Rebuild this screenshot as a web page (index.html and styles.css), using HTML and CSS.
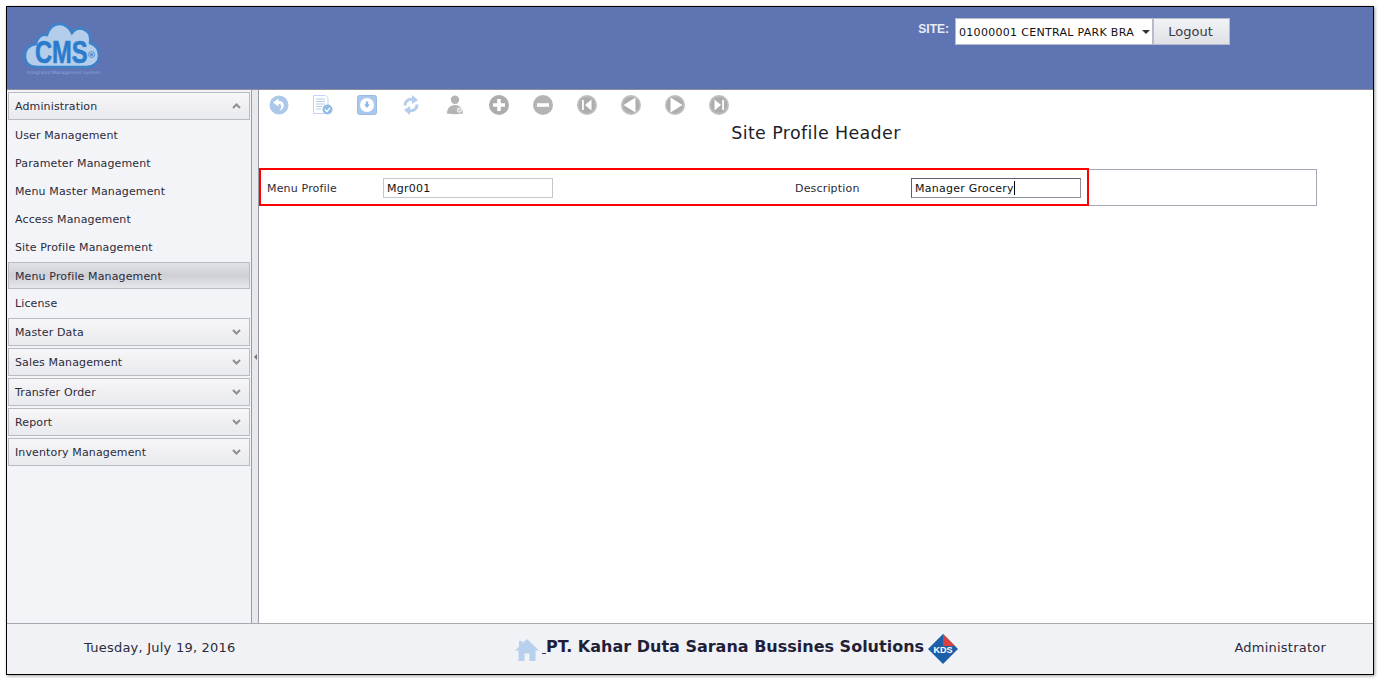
FILE: index.html
```html
<!DOCTYPE html>
<html>
	<head>
		<meta charset="UTF-8">
		<title>Site Profile Header</title>
		<link rel="stylesheet" href="styles.css">
	</head>
	<body>
		<div class="frame">
			<div class="top">
				<div class="logo">
					<svg class="cloud" width="76" height="45" viewBox="0 0 76 45">
						<path d="M14 44C5 44 1 39 1 33C1 26 6 22 12 21C13 14 18 11 23 12C25 5 30 1 35 1C41 1 46 5 48 10C51 6 55 5 59 6C65 8 67 14 66 20C72 22 75 27 75 33C75 39 70 44 63 44Z" fill="#b3cdea" stroke="#3b82cb" stroke-width="2.500"/>
					</svg>
					<span class="logo-text">CMS</span>
					<span class="logo-reg">®</span>
					<span class="logo-sub">Integrated Management System</span>
				</div>
				<div class="site">
					<label class="site-label">SITE:</label>
					<div class="site-select">
						<span class="site-value">01000001 CENTRAL PARK BRA</span>
						<span class="site-arrow"></span>
					</div>
					<button class="logout">Logout</button>
				</div>
			</div>
			<div class="middle">
				<div class="side">
					<div class="group open">Administration
						<svg class="chev" width="9" height="6" viewBox="0 0 9 6"><path d="M1 5L4.500 1.500L8 5" fill="none" stroke="#8d8f94" stroke-width="2"/></svg>
					</div>
					<div class="link">User Management</div>
					<div class="link">Parameter Management</div>
					<div class="link">Menu Master Management</div>
					<div class="link">Access Management</div>
					<div class="link">Site Profile Management</div>
					<div class="link active">Menu Profile Management</div>
					<div class="link last">License</div>
					<div class="group">Master Data
						<svg class="chev" width="9" height="6" viewBox="0 0 9 6"><path d="M1 1L4.500 4.500L8 1" fill="none" stroke="#8d8f94" stroke-width="2"/></svg>
					</div>
					<div class="group">Sales Management
						<svg class="chev" width="9" height="6" viewBox="0 0 9 6"><path d="M1 1L4.500 4.500L8 1" fill="none" stroke="#8d8f94" stroke-width="2"/></svg>
					</div>
					<div class="group">Transfer Order
						<svg class="chev" width="9" height="6" viewBox="0 0 9 6"><path d="M1 1L4.500 4.500L8 1" fill="none" stroke="#8d8f94" stroke-width="2"/></svg>
					</div>
					<div class="group">Report
						<svg class="chev" width="9" height="6" viewBox="0 0 9 6"><path d="M1 1L4.500 4.500L8 1" fill="none" stroke="#8d8f94" stroke-width="2"/></svg>
					</div>
					<div class="group">Inventory Management
						<svg class="chev" width="9" height="6" viewBox="0 0 9 6"><path d="M1 1L4.500 4.500L8 1" fill="none" stroke="#8d8f94" stroke-width="2"/></svg>
					</div>
				</div>
				<div class="split"><span class="split-arrow"></span></div>
				<div class="main">
					<div class="tools">
						<svg class="tool" width="20" height="20" viewBox="0 0 20 20"><circle cx="10" cy="10" r="9.500" fill="#abc8ea"/><path d="M9.500 3.500L4 7.500L9.500 11.500V9C12.500 9 13.500 11.500 10.500 16C16 14 17 6 9.500 6Z" fill="#fff"/></svg>
						<svg class="tool" width="20" height="20" viewBox="0 0 20 20"><path d="M.5 .5H12.500L15 3V18.500H.5Z" fill="#fff" stroke="#c3d6ee"/><path d="M3 4H12M3 6.500H12M3 9H12M3 11.500H9M3 14H8" stroke="#b6cce8"/><circle cx="14.500" cy="14.500" r="5" fill="#92bbe6"/><path d="M12 14.500L14 16.500L17 12.800" fill="none" stroke="#fff" stroke-width="1.300"/></svg>
						<svg class="tool" width="20" height="20" viewBox="0 0 20 20"><rect x=".5" y=".5" width="19" height="19" rx="2" fill="#a9c8ec" stroke="#9dbbe0"/><circle cx="10" cy="10" r="7" fill="#fff"/><path d="M8.800 6.500H11.200V9.500H13L10 13L7 9.500H8.800Z" fill="#8fb6e2"/></svg>
						<svg class="tool" width="20" height="20" viewBox="0 0 20 20"><path d="M4 10.500C4 6.500 7 3.500 12 4.500M16 9.500C16 13.500 13 16.500 8 15.500" fill="none" stroke="#b4cdec" stroke-width="3"/><path d="M11 0L17 5L11 9ZM9 20L3 15L9 11Z" fill="#b4cdec"/></svg>
						<svg class="tool" width="20" height="20" viewBox="0 0 20 20"><circle cx="10" cy="4.800" r="4.200" fill="#b4b4b4"/><path d="M2 18.500C2 13.500 5 10 10 10C15 10 18 13.500 18 18.500C13 19.500 7 19.500 2 18.500Z" fill="#b4b4b4"/><circle cx="14.500" cy="15" r="2.300" fill="#d2d2d2" stroke="#fff" stroke-width=".8"/></svg>
						<svg class="tool" width="20" height="20" viewBox="0 0 20 20"><circle cx="10" cy="10" r="10" fill="#adadad"/><path d="M8.200 4H11.800V8.200H16V11.800H11.800V16H8.200V11.800H4V8.200H8.200Z" fill="#fff"/></svg>
						<svg class="tool" width="20" height="20" viewBox="0 0 20 20"><circle cx="10" cy="10" r="10" fill="#b4b4b4"/><rect x="4" y="8.200" width="12" height="3.600" fill="#fff"/></svg>
						<svg class="tool" width="20" height="20" viewBox="0 0 20 20"><circle cx="10" cy="10" r="9" fill="#adadad" stroke="#bdbdbd" stroke-width="2"/><path d="M5 5H6.800V15H5ZM14.500 4.500V15.500L8 10Z" fill="#fff"/></svg>
						<svg class="tool" width="20" height="20" viewBox="0 0 20 20"><circle cx="10" cy="10" r="9" fill="#adadad" stroke="#bdbdbd" stroke-width="2"/><path d="M14.500 2.500V17.500L2.500 10Z" fill="#fff"/></svg>
						<svg class="tool" width="20" height="20" viewBox="0 0 20 20"><circle cx="10" cy="10" r="9" fill="#adadad" stroke="#bdbdbd" stroke-width="2"/><path d="M5.500 2.500V17.500L17.500 10Z" fill="#fff"/></svg>
						<svg class="tool" width="20" height="20" viewBox="0 0 20 20"><circle cx="10" cy="10" r="9" fill="#adadad" stroke="#bdbdbd" stroke-width="2"/><path d="M13.200 5H15V15H13.200ZM5.500 4.500V15.500L12 10Z" fill="#fff"/></svg>
					</div>
					<h1 class="title">Site Profile Header</h1>
					<div class="form">
						<div class="field">
							<span class="field-label">Menu Profile</span>
							<div class="field-input">Mgr001</div>
						</div>
						<div class="field">
							<span class="field-label">Description</span>
							<div class="field-input focus">Manager Grocery<span class="caret"></span></div>
						</div>
						<div class="mark"></div>
					</div>
				</div>
			</div>
			<div class="bottom">
				<div class="date">Tuesday, July 19, 2016</div>
				<div class="company">
					<svg class="home" width="26" height="24" viewBox="0 0 26 24"><path d="M13 1L25 12.500H21.500V23H15.500V15.500H10.500V23H4.500V12.500H1L5 8.700V3H8.500V5.300Z" fill="#b7d0ee"/></svg>
					<span class="under"></span><span class="company-name">PT. Kahar Duta Sarana Bussines Solutions</span>
					<svg class="kds" width="30" height="30" viewBox="0 0 30 30">
						<path d="M15 0L30 15H0Z" fill="#1c5fa8"/>
						<path d="M15 0L27 12H15Z" fill="#d8413f"/>
						<path d="M0 15H30L15 30Z" fill="#1c5fa8"/>
						<text class="kds-text" x="15" y="18.500" text-anchor="middle">KDS</text>
					</svg>
				</div>
				<div class="user">Administrator</div>
			</div>
		</div>
	</body>
</html>
```

FILE: styles.css
```css
*{
	margin: 0;
	padding: 0;
	box-sizing: border-box;
}
body{
	width: 1380px;
	height: 681px;
	padding: 6px 6px 6px 6px;
	background-color: #fff;
	font-family: "DejaVu Sans", Verdana, sans-serif;
	font-size: 11px;
	color: #2b2b3a;
	overflow: hidden;
}
.frame{
	height: 669px;
	border: 1px solid #000;
	box-shadow: 1px 1px 3px rgba(0,0,0,.4);
	display: flex;
	flex-direction: column;
}
.top{
	height: 83px;
	background-color: #5f75b3;
	display: flex;
	justify-content: space-between;
	border-bottom: 1px solid #8a8f9c;
}
.logo{
	position: relative;
	width: 80px;
	height: 60px;
	margin: 16px 0 0 17px;
}
.cloud{
	display: block;
}
.logo-text{
	position: absolute;
	left: 11px;
	top: 11px;
	font-family: "Liberation Sans", sans-serif;
	font-size: 32px;
	line-height: 36px;
	font-weight: bold;
	color: #2b7bcd;
	-webkit-text-stroke: .6px #2b7bcd;
	transform: scaleX(.74);
	transform-origin: left;
}
.logo-reg{
	position: absolute;
	left: 63px;
	top: 27px;
	font-size: 9px;
	font-weight: bold;
	color: #3b82cb;
}
.logo-sub{
	position: absolute;
	left: 3px;
	top: 47px;
	font-size: 4.500px;
	white-space: nowrap;
	color: #8ba6dc;
}
.site{
	display: flex;
	align-items: flex-start;
	margin: 11px 143px 0 0;
}
.site-label{
	margin: 4px 6px 0 0;
	color: #e8ecf6;
	font-weight: bold;
	font-family: "Liberation Sans", sans-serif;
	font-size: 12px;
}
.site-select{
	width: 198px;
	height: 27px;
	background-color: #fff;
	border: 1px solid #b5bbc9;
	display: flex;
	align-items: center;
	padding: 1px 0 0 3px;
	color: #111;
	letter-spacing: .3px;
}
.site-value{
	width: 180px;
	overflow: hidden;
	white-space: nowrap;
}
.site-arrow{
	margin-left: 3px;
	border-left: 4px solid transparent;
	border-right: 4px solid transparent;
	border-top: 4px solid #333;
}
.logout{
	width: 77px;
	height: 27px;
	border: 1px solid #b5bbc9;
	background: linear-gradient(#f2f3f5, #dfe1e6);
	font-family: "DejaVu Sans", sans-serif;
	font-size: 13px;
	color: #3a3a44;
	padding-right: 2px;
}
.middle{
	flex: 1;
	display: flex;
	min-height: 0;
}
.side{
	width: 244px;
	background-color: #f3f4f7;
	padding: 2px 1px 0 1px;
}
.group{
	height: 28px;
	margin-bottom: 2px;
	border: 1px solid #b9bbc2;
	background: linear-gradient(#f6f6f8, #e9eaee);
	padding: 1px 0 0 6px;
	line-height: 26px;
	display: flex;
	justify-content: space-between;
	align-items: center;
	letter-spacing: .13px;
}
.chev{
	margin: -2px 8px 0 0;
}
.link{
	height: 28px;
	padding-left: 7px;
	line-height: 28px;
	letter-spacing: .13px;
}
.active{
	height: 27px;
	padding-left: 6px;
	line-height: 27px;
	border: 1px solid #b9bbc2;
	background: linear-gradient(#e2e3e8, #cfd0d6 50%, #e6e7ea);
}
.last{
	margin-bottom: 1px;
	line-height: 30px;
}
.split{
	width: 8px;
	background-color: #e8e9ed;
	border-left: 1px solid #9a9ca5;
	border-right: 1px solid #9a9ca5;
	display: flex;
	align-items: center;
	justify-content: center;
}
.split-arrow{
	border-top: 3px solid transparent;
	border-bottom: 3px solid transparent;
	border-right: 3px solid #777;
}
.main{
	flex: 1;
	background-color: #fff;
}
.tools{
	display: flex;
	gap: 24px;
	padding: 5px 0 0 10px;
	height: 26px;
}
.tool{
	display: block;
}
.title{
	font-size: 17.500px;
	font-weight: normal;
	text-align: center;
	line-height: 20px;
	margin-top: 7px;
	letter-spacing: .35px;
	color: #1e1e2a;
}
.form{
	position: relative;
	width: 1058px;
	height: 37px;
	margin-top: 26px;
	border: 1px solid #a5a7b2;
	border-left: 0;
	display: flex;
	padding: 8px 0 0 8px;
}
.field{
	flex: none;
	width: 528px;
	display: flex;
}
.field-label{
	width: 116px;
	line-height: 21px;
	letter-spacing: .17px;
}
.field-input{
	width: 170px;
	height: 20px;
	border: 1px solid #c5c6cc;
	padding: 0 3px;
	font-family: "DejaVu Sans", sans-serif;
	font-size: 11px;
	line-height: 20px;
	color: #111;
	letter-spacing: .25px;
}
.focus{
	border-color: #5c6070 #8d909c #8d909c #5c6070;
}
.caret{
	display: inline-block;
	width: 1px;
	height: 14px;
	background-color: #000;
	vertical-align: -3px;
}
.mark{
	position: absolute;
	left: 0;
	top: -2px;
	width: 830px;
	height: 38px;
	border: 2px solid #f00;
}
.bottom{
	height: 51px;
	background-color: #f1f2f5;
	border-top: 1px solid #a8aab0;
	display: flex;
	align-items: center;
	font-size: 13px;
	letter-spacing: .23px;
}
.date{
	margin: -4px 0 0 77px;
	width: 430px;
}
.company{
	display: flex;
	align-items: center;
	flex: 1;
	letter-spacing: 0;
}
.home{
	margin-top: 2px;
}
.under{
	width: 4px;
	height: 1px;
	margin: 8px 0 0 2px;
	background-color: #335;
}
.company-name{
	font-size: 16px;
	font-weight: bold;
	font-family: "DejaVu Sans", sans-serif;
	color: #1f1f3a;
	margin-top: -6px;
}
.kds{
	margin-left: 4px;
	flex: none;
}
.kds-text{
	font-family: "Liberation Sans", sans-serif;
	font-size: 9px;
	font-weight: bold;
	fill: #fff;
}
.user{
	margin: -4px 47px 0 0;
}
```
